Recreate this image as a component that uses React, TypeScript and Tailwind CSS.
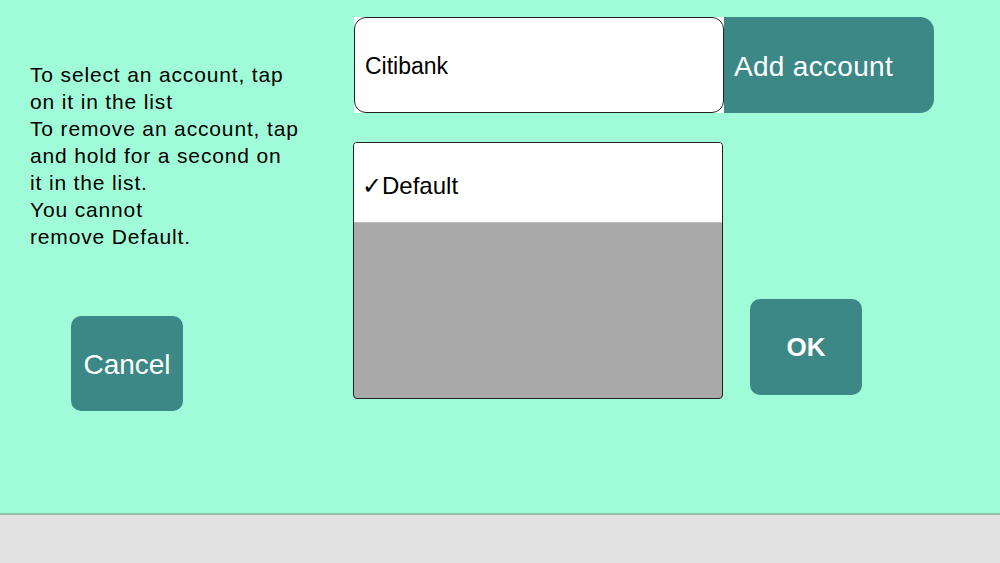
import React from "react";

export default function App() {
  const font = { fontFamily: '"Liberation Sans", Arial, sans-serif' };
  return (
    <div className="w-[1000px] h-[563px] flex flex-col bg-[#a0fcd8] overflow-hidden" style={font}>
      <div className="h-[513px] flex flex-row">
        {/* left column */}
        <div className="w-[354px] flex flex-col pl-[30px] pt-[61px]">
          <div className="text-[21px] leading-[27px] tracking-[0.85px] text-black">
            <div>To select an account, tap</div>
            <div>on it in the list</div>
            <div>To remove an account, tap</div>
            <div>and hold for a second on</div>
            <div>it in the list.</div>
            <div>You cannot</div>
            <div>remove Default.</div>
          </div>
          <div className="ml-[41px] mt-[66px] w-[112px] h-[95px] rounded-[10px] bg-[#3b8886] flex items-center justify-center text-white text-[28px] pt-[2px]">
            Cancel
          </div>
        </div>
        {/* right part */}
        <div className="flex flex-col pt-[17px]">
          <div className="flex flex-row">
            <div className="w-[370px] h-[96px] bg-white">
              <div className="w-full h-full rounded-[12px] border border-[#222] flex items-center pl-[10px] pt-[2px] text-[23px] text-black">
                Citibank
              </div>
            </div>
            <div className="w-[210px] h-[96px] bg-[#3b8886] rounded-r-[14px] flex items-center pl-[10px] pt-[4px] text-white text-[28px] tracking-[0.3px]">
              Add account
            </div>
          </div>
          <div className="flex flex-row items-start">
            <div className="ml-[-1px] mt-[29px] w-[370px] h-[257px] rounded-[4px] border border-[#222] overflow-hidden flex flex-col bg-[#a9a9a9]">
              <div className="h-[80px] bg-white flex items-center pl-[8px] pt-[6px] text-[24px] text-black border-b border-[#bbb]">
                ✓Default
              </div>
            </div>
            <div className="ml-[27px] mt-[186px] w-[112px] h-[96px] rounded-[10px] bg-[#3b8886] flex items-center justify-center text-white text-[26px] font-bold">
              OK
            </div>
          </div>
        </div>
      </div>
      <div className="h-[2px] bg-[#8fbfa9]" />
      <div className="flex-1 bg-[#e2e2e2]" />
    </div>
  );
}
